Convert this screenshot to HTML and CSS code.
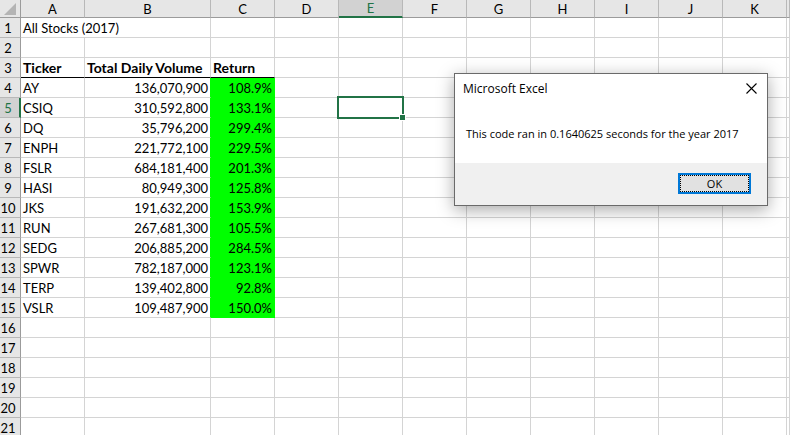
FILE: index.html
```html
<!DOCTYPE html>
<html lang="en">
<head>
<meta charset="utf-8">
<title>All Stocks (2017)</title>
<link rel="stylesheet" href="styles.css">
</head>
<body>
<main class="workbook">
<table class="sheet">
<colgroup><col class="col-head"><col class="col"><col class="col-wide"><col class="col"><col class="col"><col class="col"><col class="col"><col class="col"><col class="col"><col class="col"><col class="col"><col class="col"><col></colgroup>
<thead>
<tr><th class="corner"><svg class="corner-mark" viewBox="0 0 12 12" aria-hidden="true"><path d="M12 0V12H0Z" fill="#b4b4b4"/></svg></th><th>A</th><th>B</th><th>C</th><th>D</th><th class="current">E</th><th>F</th><th>G</th><th>H</th><th>I</th><th>J</th><th>K</th><th></th></tr>
</thead>
<tbody id="rows"></tbody>
</table>
</main>
<section class="dialog" role="dialog" aria-labelledby="dialog-title">
<header class="dialog-bar">
<h1 class="dialog-title" id="dialog-title">Microsoft Excel</h1>
<button class="close" type="button" aria-label="Close"><svg class="close-icon" viewBox="0 0 11 11" aria-hidden="true"><path d="M.5 .5L10.5 10.5M10.5 .5L.5 10.5" stroke="#000" stroke-width="1.1"/></svg></button>
</header>
<p class="message">This code ran in 0.1640625 seconds for the year 2017</p>
<footer class="actions"><button class="ok" type="button"><span class="ok-focus">OK</span></button></footer>
</section>
<script src="sheet.js"></script>
</body>
</html>
```
FILE: styles.css
```css
* { box-sizing: border-box; }
body {
  margin: 0;
  background: #fff;
  color: #000;
  font-family: Lato, "Liberation Sans", sans-serif;
  font-size: 13px;
}
.workbook { height: 100vh; overflow: hidden; }
.sheet {
  width: 100%;
  table-layout: fixed;
  border-collapse: separate;
  border-spacing: 0;
}
.col-head { width: 21px; }
.col { width: 64px; }
.col-wide { width: 126px; }
.sheet th, .sheet td {
  height: 20px;
  padding: 0 2px;
  border-right: 1px solid #d4d4d4;
  border-bottom: 1px solid #d4d4d4;
  line-height: 18px;
  white-space: nowrap;
  text-align: left;
}
.sheet th:last-child, .sheet td:last-child { padding: 0; }
.sheet thead th {
  height: 18px;
  line-height: 16px;
  background: #e6e6e6;
  border-right-color: #b8b8b8;
  border-bottom-color: #9b9b9b;
  font-weight: 400;
  text-align: center;
}
.sheet tbody th {
  padding: 0 4px 0 0;
  background: #e6e6e6;
  border-right-color: #9b9b9b;
  border-bottom-color: #b8b8b8;
  font-weight: 400;
  text-align: center;
}
.sheet .corner { padding: 0 0 0 4px; border-right-color: #9b9b9b; }
.corner-mark { display: block; width: 12px; height: 12px; }
.sheet thead .current {
  background: #d2d2d2;
  color: #217346;
  border-bottom: 2px solid #217346;
}
.sheet tbody .current {
  padding-right: 3px;
  background: #d2d2d2;
  color: #217346;
  border-right: 2px solid #217346;
}
.sheet .label { font-size: 14px; font-weight: 700; border-bottom-color: #000; }
.sheet .number { text-align: right; border-right-color: #0f0; }
.sheet .gain {
  text-align: right;
  background: #0f0;
  border-color: #0f0;
}
.sheet .active { position: relative; }
.selection { position: absolute; inset: -2px; border: 2px solid #217346; }
.selection::after {
  content: "";
  position: absolute;
  right: -3px;
  bottom: -3px;
  width: 5px;
  height: 5px;
  background: #217346;
  box-shadow: 0 0 0 1px #fff;
}
.dialog {
  position: absolute;
  left: 454px;
  top: 73px;
  width: 314px;
  border: 1px solid #6a6a6a;
  background: #fff;
  box-shadow: 0 4px 16px rgba(0, 0, 0, .34);
  font-family: "Open Sans", "Noto Sans", sans-serif;
  font-size: 12px;
}
.dialog-bar {
  display: flex;
  justify-content: space-between;
  align-items: center;
  height: 28px;
  padding: 0 8px;
}
.dialog-title { margin: 0; font-size: 12px; font-weight: 400; }
.close { padding: 2px; border: 0; background: none; }
.close-icon { display: block; width: 11px; height: 11px; }
.message {
  margin: 0;
  padding: 24px 11px 21px;
  font-size: 11px;
  line-height: 16px;
}
.actions {
  display: flex;
  justify-content: flex-end;
  padding: 10px 16px 11px;
  background: #f0f0f0;
}
.ok {
  width: 73px;
  height: 21px;
  padding: 0;
  border: 2px solid #0078d7;
  background: #e1e1e1;
  color: #000;
  font: 11px/15px "Open Sans", "Noto Sans", sans-serif;
}
.ok-focus { display: block; border: 1px dotted #000; }
```
FILE: sheet.js
```js
const stocks = [
  ["AY", "136,070,900", "108.9%"],
  ["CSIQ", "310,592,800", "133.1%"],
  ["DQ", "35,796,200", "299.4%"],
  ["ENPH", "221,772,100", "229.5%"],
  ["FSLR", "684,181,400", "201.3%"],
  ["HASI", "80,949,300", "125.8%"],
  ["JKS", "191,632,200", "153.9%"],
  ["RUN", "267,681,300", "105.5%"],
  ["SEDG", "206,885,200", "284.5%"],
  ["SPWR", "782,187,000", "123.1%"],
  ["TERP", "139,402,800", "92.8%"],
  ["VSLR", "109,487,900", "150.0%"]
];
const blank = n => "<td></td>".repeat(n);
let html = "";
for (let row = 1; row <= 22; row++) {
  const stock = stocks[row - 4];
  let cells = blank(12);
  if (row === 1) {
    cells = '<td colspan="2">All Stocks (2017)</td>' + blank(10);
  } else if (row === 3) {
    cells = '<td class="label">Ticker</td><td class="label">Total Daily Volume</td><td class="label">Return</td>' + blank(9);
  } else if (stock) {
    const rest = row === 5
      ? blank(1) + '<td class="active"><span class="selection"></span></td>' + blank(7)
      : blank(9);
    cells = `<td>${stock[0]}</td><td class="number">${stock[1]}</td><td class="gain">${stock[2]}</td>` + rest;
  }
  html += `<tr><th${row === 5 ? ' class="current"' : ""}>${row}</th>${cells}</tr>`;
}
document.getElementById("rows").innerHTML = html;
```
